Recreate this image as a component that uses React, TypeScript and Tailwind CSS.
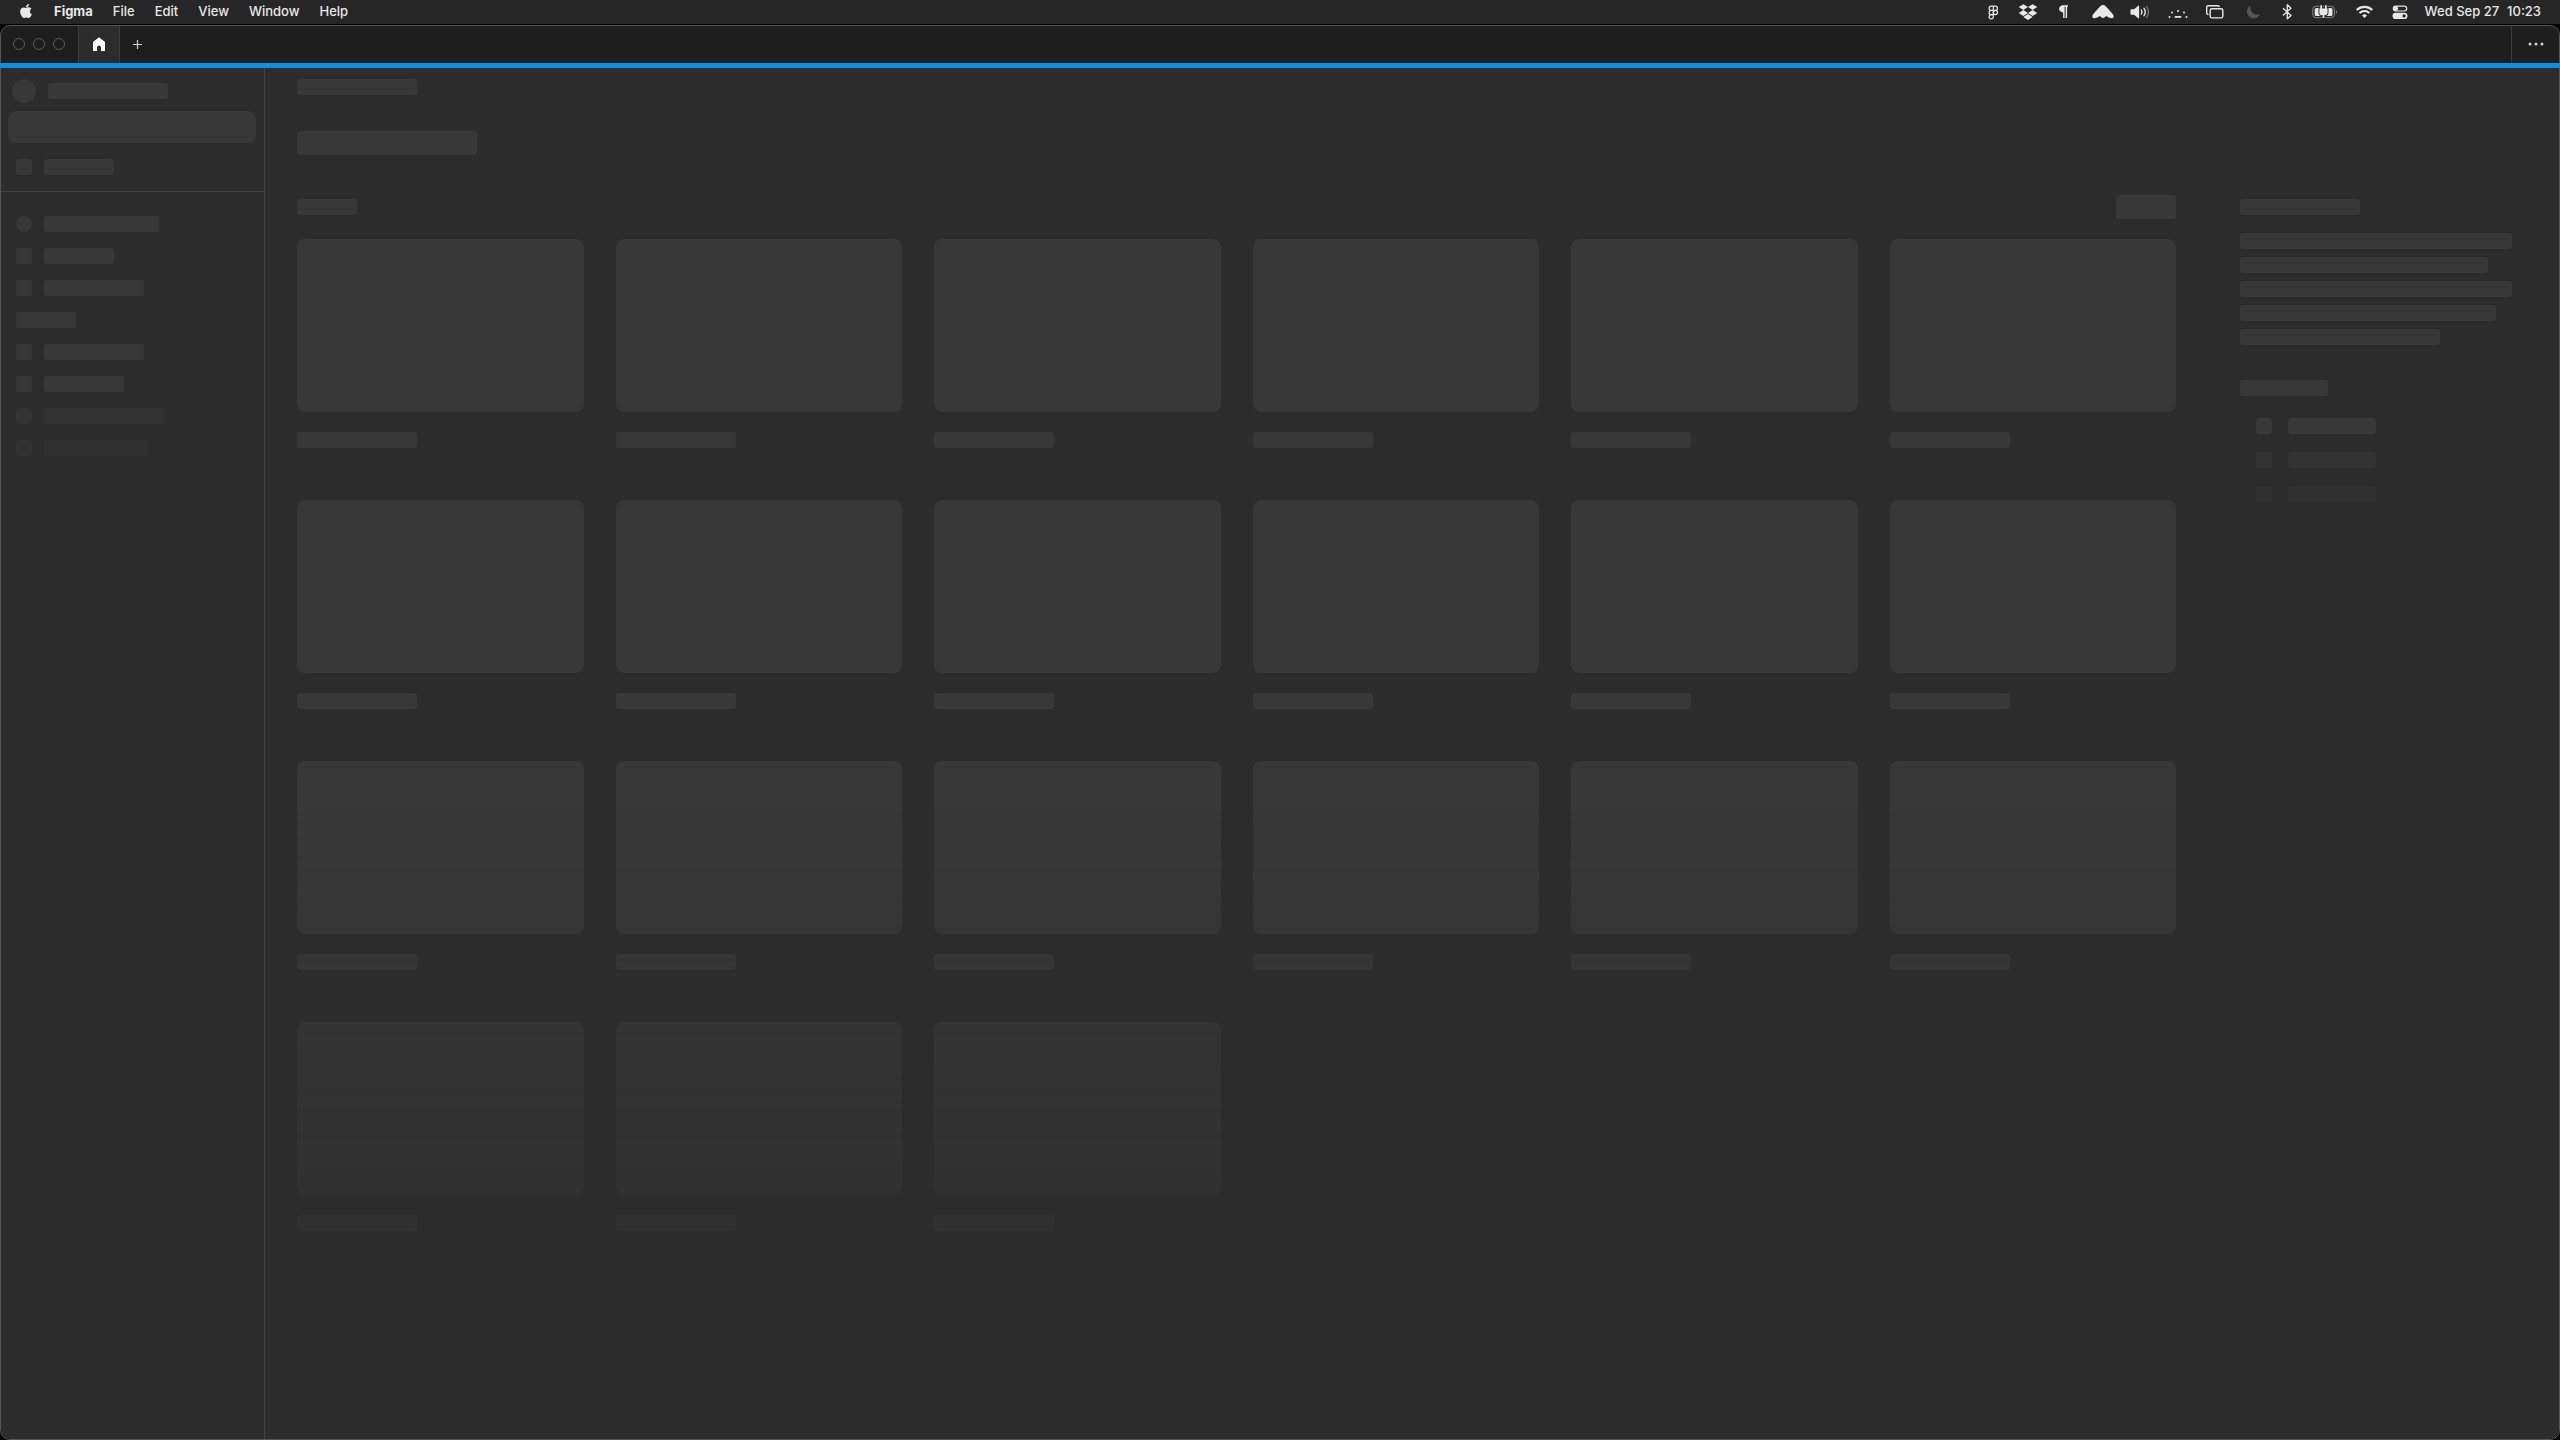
import type { ReactElement, ReactNode } from "react";
import { FaApple, FaDropbox } from "react-icons/fa";

interface StatusIconProps {
  label: string;
  width: number;
  children: ReactNode;
}

interface SidebarRow {
  bar: string;
  marker: "circle" | "square" | "none";
  fade: string;
}

const menus: string[] = ["File", "Edit", "View", "Window", "Help"];
const windowControls: string[] = ["Close", "Minimize", "Zoom"];

const sidebarRows: SidebarRow[] = [
  { bar: "w-[115px]", marker: "circle", fade: "" },
  { bar: "w-[70px]", marker: "square", fade: "" },
  { bar: "w-[100px]", marker: "square", fade: "" },
  { bar: "w-[60px]", marker: "none", fade: "" },
  { bar: "w-[100px]", marker: "square", fade: "" },
  { bar: "w-[80px]", marker: "square", fade: "" },
  { bar: "w-[120px]", marker: "square", fade: "opacity-60" },
  { bar: "w-[105px]", marker: "square", fade: "opacity-35" },
];

const paragraphLines: string[] = ["w-[272px]", "w-[248px]", "w-[272px]", "w-[256px]", "w-[200px]"];
const linkFades: string[] = ["opacity-100", "opacity-60", "opacity-35"];
const cardCount = 21;

export default function App(): ReactElement {
  return (
    <div className="flex min-h-screen flex-col bg-black font-['Inter',sans-serif]">
      <MenuBar />
      <div className="mt-px flex flex-1 flex-col rounded-[10px] border border-[#555555] bg-[#1e1e1e]">
        <TabBar />
        <div className="-mx-px h-[5px] shrink-0 bg-[#118ce7]" />
        <div className="flex flex-1 rounded-b-[9px] bg-[#2c2c2c]">
          <Sidebar />
          <FileBrowser />
        </div>
      </div>
    </div>
  );
}

function MenuBar(): ReactElement {
  return (
    <header className="flex h-6 shrink-0 items-start justify-between bg-[#262626] text-[13px] leading-[22px] font-medium text-[#e8e8e8]">
      <nav className="flex items-center pl-2">
        <button aria-label="Apple menu" className="flex w-9 justify-center" type="button">
          <FaApple className="size-4" />
        </button>
        <button className="px-[10px] font-bold" type="button">
          Figma
        </button>
        {menus.map((menu) => (
          <button className="px-[10px]" key={menu} type="button">
            {menu}
          </button>
        ))}
      </nav>
      <div className="flex items-start pr-[19px]">
        <StatusIcons />
        <time className="flex gap-2 pl-[9px] whitespace-nowrap">
          <span>Wed Sep 27</span>
          <span>10:23</span>
        </time>
      </div>
    </header>
  );
}

function StatusIcon({ label, width, children }: StatusIconProps): ReactElement {
  return (
    <button aria-label={label} type="button">
      <svg fill="currentColor" height={24} viewBox={`0 0 ${width} 24`} width={width}>
        {children}
      </svg>
    </button>
  );
}

function StatusIcons(): ReactElement {
  return (
    <div className="flex h-6 items-center">
      <StatusIcon label="Figma" width={30}>
        <g fill="none" stroke="currentColor" strokeWidth="1.2">
          <path d="M15.3 6.2h-2.1a2.1 2.1 0 0 0 0 4.2h2.1zM15.3 6.2h2.1a2.1 2.1 0 0 1 0 4.2h-2.1zM15.3 10.4h-2.1a2.1 2.1 0 0 0 0 4.2h2.1z" />
          <circle cx="17.4" cy="12.5" r="2.1" />
          <path d="M15.3 14.6h-2.1a2.1 2.1 0 1 0 2.1 2.1z" />
        </g>
      </StatusIcon>
      <button aria-label="Dropbox" className="flex w-10 justify-center" type="button">
        <FaDropbox className="h-[18px] w-5" />
      </button>
      <StatusIcon label="Paragraph" width={32}>
        <path d="M15.2 5.2H20v1.5h-.9V18h-1.5V6.7h-1V18h-1.5v-5.6c-2.3 0-4-1.5-4-3.6s1.8-3.6 4.1-3.6z" />
      </StatusIcon>
      <StatusIcon label="Cloud" width={42}>
        <path d="M23 5c1.6 0 2.4.8 3.4 2 2.6 2.900 4.700 5.100 6.800 7.700 1.200 1.700.3 3.500-1.500 3.500-2.300 0-3.700-.7-5.100-2.100L23 18.200l-3.600-2.100c-1.400 1.400-2.800 2.100-5.100 2.100-1.800 0-2.700-1.800-1.500-3.500C14.900 12.100 17 9.900 19.600 7c1-1.200 1.800-2 3.400-2z" />
      </StatusIcon>
      <StatusIcon label="Volume" width={38}>
        <path d="M9.500 9.200h2.600l4.100-3.400c.5-.4.9-.2.9.4v11.600c0 .6-.4.8-.9.4l-4.100-3.400H9.500c-.6 0-1-.4-1-1v-3.600c0-.6.4-1 1-1z" />
        <g fill="none" stroke="currentColor" strokeLinecap="round" strokeWidth="1.4">
          <path d="M19.300 9.900a3.600 3.600 0 0 1 0 4.200" />
          <path d="M21.900 8.200a6.500 6.500 0 0 1 0 7.600" />
          <path d="M24.600 6.600a9.600 9.600 0 0 1 0 10.800" opacity=".4" />
        </g>
      </StatusIcon>
      <StatusIcon label="Keyboard brightness" width={36}>
        <rect height="1.8" rx=".9" width="7" x="14.5" y="16" />
        <circle cx="9.5" cy="17" r="1" />
        <circle cx="26.5" cy="17" r="1" />
        <circle cx="12" cy="12.5" r="1" />
        <circle cx="24" cy="12.5" r="1" />
        <circle cx="18" cy="11" r="1" />
      </StatusIcon>
      <StatusIcon label="Stage" width={38}>
        <g fill="none" stroke="currentColor" strokeWidth="1.4">
          <path d="M12.500 14.500h-.2a1.600 1.600 0 0 1-1.600-1.600V7.300a1.600 1.600 0 0 1 1.600-1.600h9.500a1.600 1.600 0 0 1 1.600 1.300" />
          <rect height="9.2" rx="1.7" width="12.6" x="14.2" y="8.7" />
        </g>
      </StatusIcon>
      <StatusIcon label="Focus" width={37}>
        <path
          d="M16.500 5.500a6.800 6.800 0 1 0 9.500 8.600c-5.500 2.200-11-2.600-9.500-8.600z"
          fill="#555555"
        />
      </StatusIcon>
      <StatusIcon label="Bluetooth" width={32}>
        <path
          d="M12 8.200l8 7.200-3.700 3.400V4.700L20 8.200l-8 7.200"
          fill="none"
          stroke="currentColor"
          strokeLinejoin="round"
          strokeWidth="1.3"
        />
      </StatusIcon>
      <StatusIcon label="Battery" width={43}>
        <rect
          fill="none"
          height="11.4"
          opacity=".5"
          rx="3.2"
          stroke="currentColor"
          width="21.6"
          x="9.8"
          y="6.3"
        />
        <path d="M33 10.200c1.300.6 1.300 3 0 3.600z" opacity=".5" />
        <rect height="8" rx="1.6" width="17.8" x="11.7" y="8" />
        <path
          d="M18.200 4.900c.5 0 .9.3.9.8v2.700h2.800V5.700c0-.5.4-.8.9-.8s.9.3.9.8v2.700h.9v4c0 1.500-1.100 2.600-2.600 2.600h-.6v3h-1.800v-3H19a2.600 2.600 0 0 1-2.600-2.600v-4h.9V5.700c0-.5.4-.8.9-.8z"
          paintOrder="stroke"
          stroke="#262626"
          strokeWidth="1.8"
        />
      </StatusIcon>
      <StatusIcon label="Wi-Fi" width={36}>
        <g fill="none" stroke="currentColor" strokeWidth="2.1">
          <path d="M10.700 10a11.200 11.200 0 0 1 15.600 0" />
          <path d="M13.500 13a7.200 7.200 0 0 1 10 0" />
        </g>
        <path d="M18.500 18.100l-2.500-2.600a3.600 3.600 0 0 1 5 0z" />
      </StatusIcon>
      <StatusIcon label="Control Center" width={34}>
        <rect
          fill="none"
          height="4.8"
          rx="2.4"
          stroke="currentColor"
          strokeWidth="1.2"
          width="13.4"
          x="11.3"
          y="6.2"
        />
        <circle cx="13.8" cy="8.6" r="2.4" />
        <path
          clipRule="evenodd"
          d="M13.600 12.800h8.800a3.100 3.100 0 0 1 0 6.200h-8.800a3.100 3.100 0 0 1 0-6.200zm8.500 1.400a1.700 1.700 0 1 0 0 3.400 1.700 1.700 0 0 0 0-3.400z"
          fillRule="evenodd"
        />
      </StatusIcon>
    </div>
  );
}

function TabBar(): ReactElement {
  return (
    <div className="flex h-[37px] shrink-0 items-stretch">
      <div className="flex items-center gap-2 px-3 pb-px">
        {windowControls.map((control) => (
          <button
            aria-label={control}
            className="size-3 rounded-full border border-[#5a5a5a]"
            key={control}
            type="button"
          />
        ))}
      </div>
      <button
        aria-label="Home"
        className="ml-px flex w-[42px] items-center justify-center border-x border-[#3c3c3c] bg-[#2c2c2c] pb-px text-white"
        type="button"
      >
        <svg className="size-[14px]" fill="currentColor" viewBox="0 0 14 14">
          <path d="M7 .2L13 5v9H9v-3.500a2 2 0 0 0-4 0V14H1V5z" />
        </svg>
      </button>
      <button aria-label="New tab" className="flex w-8 items-center justify-center pb-px pl-0.5 text-[#d0d0d0]" type="button">
        <svg className="size-[11px]" fill="none" stroke="currentColor" viewBox="0 0 11 11">
          <path d="M5.500 1v9M1 5.500h9" strokeWidth="1.2" />
        </svg>
      </button>
      <button
        aria-label="More"
        className="ml-auto flex w-12 items-center justify-center border-l border-[#3c3c3c] pb-px pl-px text-[#d0d0d0]"
        type="button"
      >
        <svg className="h-1 w-4" fill="currentColor" viewBox="0 0 16 4">
          <circle cx="2" cy="2" r="1.5" />
          <circle cx="8" cy="2" r="1.5" />
          <circle cx="14" cy="2" r="1.5" />
        </svg>
      </button>
    </div>
  );
}

function Bar({ className }: { className: string }): ReactElement {
  return <div className={`h-4 rounded-[3px] bg-[#383838] ${className}`} />;
}

function Sidebar(): ReactElement {
  return (
    <aside className="w-[264px] shrink-0 border-r border-[#444444]">
      <div className="border-b border-[#444444] pt-[11px] pr-2 pb-4 pl-[7px]">
        <div className="flex items-center gap-3 pl-1">
          <div className="size-6 rounded-full bg-[#383838]" />
          <Bar className="w-[120px]" />
        </div>
        <div className="mt-2 h-8 rounded-lg bg-[#383838]" />
        <div className="mt-4 flex gap-3 pl-2">
          <Bar className="w-4" />
          <Bar className="w-[70px]" />
        </div>
      </div>
      <ul className="flex flex-col gap-4 pt-6 pl-[15px]">
        {sidebarRows.map((row, index) => (
          <li className={`flex gap-3 ${row.fade}`} key={index}>
            {row.marker === "circle" ? <div className="size-4 rounded-full bg-[#383838]" /> : null}
            {row.marker === "square" ? <Bar className="w-4" /> : null}
            <Bar className={row.bar} />
          </li>
        ))}
      </ul>
    </aside>
  );
}

function FileBrowser(): ReactElement {
  return (
    <main className="min-w-0 flex-1 pt-[11px] pr-[47px] pl-8">
      <Bar className="w-[120px]" />
      <div className="mt-9 h-6 w-[180px] rounded-[3px] bg-[#383838]" />
      <div className="mt-10 flex gap-16">
        <section className="min-w-0 flex-1">
          <div className="flex items-center justify-between">
            <Bar className="w-[60px]" />
            <div className="h-6 w-[60px] rounded-[3px] bg-[#383838]" />
          </div>
          <div className="mt-5 grid grid-cols-6 gap-x-8 gap-y-[52px] [mask-image:linear-gradient(to_bottom,black_57%,transparent_122%)]">
            {Array.from({ length: cardCount }, (_, index) => (
              <div key={index}>
                <div className="h-[173px] rounded-lg bg-[#383838]" />
                <Bar className="mt-5 w-[120px]" />
              </div>
            ))}
          </div>
        </section>
        <DetailsPanel />
      </div>
    </main>
  );
}

function DetailsPanel(): ReactElement {
  return (
    <aside className="w-[272px] shrink-0 pt-1">
      <Bar className="w-[120px]" />
      <div className="mt-[18px] flex flex-col gap-2">
        {paragraphLines.map((line, index) => (
          <Bar className={line} key={index} />
        ))}
      </div>
      <Bar className="mt-[35px] w-[88px]" />
      <ul className="mt-[22px] flex flex-col gap-[18px] pl-4">
        {linkFades.map((fade) => (
          <li className={`flex gap-4 ${fade}`} key={fade}>
            <Bar className="w-4" />
            <Bar className="w-[88px]" />
          </li>
        ))}
      </ul>
    </aside>
  );
}
